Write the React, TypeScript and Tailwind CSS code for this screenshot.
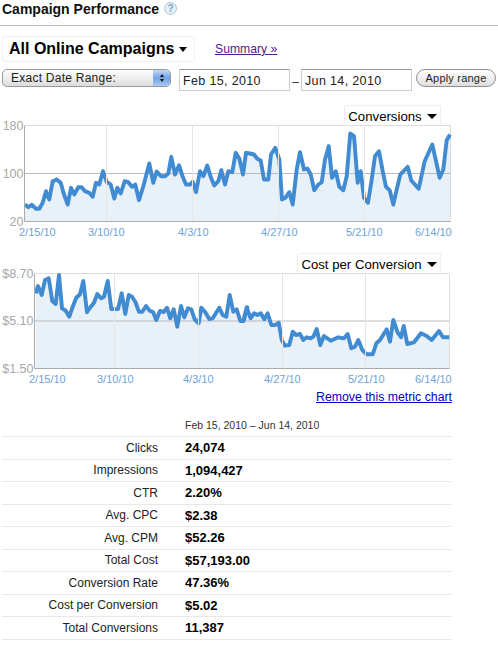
import React from 'react';

type Pt = [number, number];

// points read off the chart, in page pixels relative to the svg
const zoomLeft = (pts: number[][], top: number): Pt[] => pts.map(([x, y]) => [x / 3, y / 3 + top]);
const zoomRight = (pts: number[][], top: number): Pt[] => pts.map(([x, y]) => [240 + x / 3, y / 3 + top]);

const conversions: Pt[] = [
  ...zoomLeft([[75,315],[85,323],[95,316],[108,328],[118,328],[128,310],[138,275],[148,300],[158,245],[170,240],[182,250],[192,285],[203,315],[213,265],[223,285],[235,263],[245,263],[255,275],[268,280],[278,292],[288,250],[298,255],[309,215],[320,247],[332,255],[343,297],[352,265],[362,282],[374,245],[385,248],[396,262],[406,255],[417,302],[430,260],[448,192],[460,250],[470,216],[483,230],[495,230],[505,222],[514,172],[525,225],[537,197],[548,232],[558,255],[570,255],[578,247],[588,278],[600,215],[610,230],[622,198],[633,235],[643,258],[655,245],[664,212],[675,255],[685,215],[697,218],[707,160],[718,177],[729,225]], 0),
  ...zoomRight([[18,160],[30,162],[42,165],[52,178],[62,183],[72,240],[85,240],[93,165],[106,145],[118,180],[126,300],[136,295],[148,278],[158,315],[170,210],[180,158],[192,210],[202,207],[212,225],[223,272],[235,255],[245,248],[255,180],[266,140],[276,235],[287,215],[298,262],[310,272],[320,230],[331,102],[342,110],[353,250],[362,215],[372,295],[384,310],[395,240],[405,170],[417,155],[428,215],[438,262],[449,272],[460,315],[470,270],[481,225],[503,202],[514,243],[536,268],[554,185],[577,135],[599,235],[610,210],[620,122],[630,105]], 0),
];

const costPerConversion: Pt[] = [
  ...zoomLeft([[107,130],[114,108],[125,135],[135,90],[146,85],[157,153],[167,162],[177,75],[186,175],[197,182],[208,200],[218,170],[229,143],[240,133],[250,93],[261,187],[272,170],[282,158],[292,132],[303,145],[312,140],[323,93],[334,177],[354,177],[365,130],[376,192],[386,135],[396,140],[406,155],[417,185],[427,185],[438,168],[449,182],[459,186],[469,210],[480,183],[491,186],[501,173],[511,205],[521,178],[532,230],[543,168],[553,202],[564,175],[574,178],[584,208],[596,220],[604,173],[615,185],[628,207],[638,205],[658,173],[668,195],[679,200],[689,135],[700,185],[710,178],[721,213],[731,213],[742,172]], 0),
  ...zoomRight([[10,213],[20,172],[32,205],[42,190],[52,195],[62,190],[73,208],[83,190],[94,225],[106,225],[116,218],[125,270],[135,287],[148,285],[158,245],[168,255],[180,252],[190,270],[200,262],[212,265],[220,260],[230,237],[241,285],[252,258],[262,265],[272,272],[295,262],[312,265],[323,252],[334,295],[345,290],[355,270],[367,300],[380,313],[398,313],[409,280],[420,270],[440,238],[450,275],[460,210],[472,245],[483,262],[491,228],[502,282],[522,277],[543,250],[560,258],[575,270],[597,243],[609,262],[628,262]], 0),
];

interface ChartProps {
  points: Pt[];
  left: number;
  right: number;
  top: number;
  bottom: number;
  yLabels: string[];
  xTicks: number[];
  xLabels: { x: number; text: string }[];
  height: number;
}

function Chart({ points, left, right, top, bottom, yLabels, xTicks, xLabels, height }: ChartProps) {
  const mid = (top + bottom) / 2;
  const line = points.map(([x, y]) => `${x.toFixed(1)},${y.toFixed(1)}`).join(' ');
  const last = points[points.length - 1];
  const area = `${points[0][0]},${bottom} ${line} ${last[0]},${bottom}`;

  return (
    <svg width={498} height={height} className="block overflow-visible" fontFamily="'Liberation Sans', Arial, sans-serif">
      <polygon points={area} fill="#e8f0f8" />
      <line x1={left} x2={right} y1={top} y2={top} stroke="#dddddd" />
      <line x1={right} x2={right} y1={top} y2={bottom} stroke="#dddddd" />
      <line x1={left} x2={right} y1={mid} y2={mid} stroke="#bbbbbb" />
      <polyline points={line} fill="none" stroke="#418bd2" strokeWidth="3.9" strokeLinejoin="round" />
      {xTicks.map((x) => (
        <line key={x} x1={x} x2={x} y1={top} y2={bottom} stroke="#e6e6e6" />
      ))}
      <line x1={left} x2={left} y1={top} y2={bottom} stroke="#aaaaaa" />
      <line x1={left} x2={right} y1={bottom} y2={bottom} stroke="#aaaaaa" />
      <text x={left - 1} y={top + 4} textAnchor="end" fill="#a8a8a8" fontSize="12.5">{yLabels[0]}</text>
      <text x={left - 1} y={mid + 4} textAnchor="end" fill="#a8a8a8" fontSize="12.5">{yLabels[1]}</text>
      <text x={left - 1} y={bottom + 4} textAnchor="end" fill="#a8a8a8" fontSize="12.5">{yLabels[2]}</text>
      {xLabels.map((l) => (
        <text key={l.text} x={l.x} y={bottom + 14} fill="#6ea3d9" fontSize="11">{l.text}</text>
      ))}
    </svg>
  );
}

function MetricTag({ label, width }: { label: string; width: string }) {
  return (
    <div className={`flex h-[20px] items-center justify-center gap-[5px] rounded-t-[2px] border border-b-0 border-[#eeeeee] pt-[2px] text-[13.2px] text-black ${width}`}>
      {label}
      <span className="h-0 w-0 border-x-[5px] border-t-[5px] border-x-transparent border-t-black" />
    </div>
  );
}

const stats = [
  ['Clicks', '24,074'],
  ['Impressions', '1,094,427'],
  ['CTR', '2.20%'],
  ['Avg. CPC', '$2.38'],
  ['Avg. CPM', '$52.26'],
  ['Total Cost', '$57,193.00'],
  ['Conversion Rate', '47.36%'],
  ['Cost per Conversion', '$5.02'],
  ['Total Conversions', '11,387'],
];

export default function App() {
  return (
    <div className="h-[648px] w-[498px] overflow-hidden bg-white font-['Liberation_Sans',Arial,sans-serif] text-black">
      <div className="flex h-[26px] items-start gap-[5px] border-b border-[#bbbbbb] pl-[2px] pt-[1px]">
        <h1 className="text-[14px] font-bold leading-[16px] text-[#111111]">Campaign Performance</h1>
        <span className="mt-[1px] flex h-[13px] w-[13px] items-center justify-center rounded-full border border-[#a9c6dc] bg-[#e6f0f7] text-[10px] font-bold leading-none text-[#7ba6c6]">?</span>
      </div>

      <div className="mt-[10px] flex items-center pl-[2px]">
        <div className="flex h-[26px] w-[193px] items-center gap-[5px] rounded-[2px] border border-[#f0f0f0] pl-[6px]">
          <span className="whitespace-nowrap text-[16px] font-bold leading-none">All Online Campaigns</span>
          <span className="h-0 w-0 border-x-[4.5px] border-t-[5px] border-x-transparent border-t-black" />
        </div>
        <a href="#summary" className="ml-[20px] text-[12.2px] text-[#551a8b] underline">Summary »</a>
      </div>

      <div className="mt-[7px] flex items-start pl-[2px]">
        <div className="flex h-[18px] w-[169px] items-stretch overflow-hidden rounded-[5px] border border-[#9a9a9a] bg-gradient-to-b from-[#fdfdfd] via-[#eeeeee] to-[#dcdcdc]">
          <span className="flex-1 pl-[8px] text-[12px] leading-[16px] tracking-[0.25px] text-[#222222]">Exact Date Range:</span>
          <span className="flex w-[17px] flex-col items-center justify-center gap-[2px] bg-gradient-to-b from-[#c3d9f5] via-[#6fa3e6] to-[#a9c9f2]">
            <span className="h-0 w-0 border-x-[2.5px] border-b-[3px] border-x-transparent border-b-[#111111]" />
            <span className="h-0 w-0 border-x-[2.5px] border-t-[3px] border-x-transparent border-t-[#111111]" />
          </span>
        </div>
        <div className="ml-[8px] h-[22px] w-[111px] border border-[#cccccc] border-t-[#999999] pl-[3px] text-[12.5px] leading-[22px] tracking-[0.35px] text-[#222222]">Feb 15, 2010</div>
        <span className="w-[11px] pt-[5px] text-center text-[12px] leading-[16px] text-[#333333]">–</span>
        <div className="h-[22px] w-[111px] border border-[#cccccc] border-t-[#999999] pl-[3px] text-[12.5px] leading-[22px] tracking-[0.35px] text-[#222222]">Jun 14, 2010</div>
        <button className="ml-[4px] h-[18px] w-[80px] rounded-full border border-[#8f8f8f] bg-gradient-to-b from-[#ffffff] via-[#f0f0f0] to-[#dddddd] text-[11px] leading-[14px] tracking-[0.2px] text-[#222222]">Apply range</button>
      </div>

      <div className="mt-[14px] flex justify-end pr-[57px]">
        <MetricTag label="Conversions" width="w-[97px]" />
      </div>
      <Chart
        points={conversions.map(([x, y]) => [x, y + 100 - 125.5] as Pt)}
        left={24.5}
        right={450.5}
        top={0.5}
        bottom={96.5}
        height={114}
        yLabels={['180', '100', '20']}
        xTicks={[106.5, 192.5, 278.5, 364.5]}
        xLabels={[
          { x: 19, text: '2/15/10' },
          { x: 88, text: '3/10/10' },
          { x: 178, text: '4/3/10' },
          { x: 261, text: '4/27/10' },
          { x: 346, text: '5/21/10' },
          { x: 415, text: '6/14/10' },
        ]}
      />

      <div className="mt-[14px] flex justify-end pr-[57px]">
        <MetricTag label="Cost per Conversion" width="w-[144px]" />
      </div>
      <Chart
        points={costPerConversion.map(([x, y]) => [x, y + 250 - 273] as Pt)}
        left={34.5}
        right={449.5}
        top={0.5}
        bottom={95.5}
        height={112}
        yLabels={['$8.70', '$5.10', '$1.50']}
        xTicks={[114.5, 198.5, 282.5, 365.5]}
        xLabels={[
          { x: 29, text: '2/15/10' },
          { x: 97, text: '3/10/10' },
          { x: 183, text: '4/3/10' },
          { x: 264, text: '4/27/10' },
          { x: 348, text: '5/21/10' },
          { x: 415, text: '6/14/10' },
        ]}
      />

      <div className="mt-[5px] flex justify-end pr-[46px]">
        <a href="#remove" className="text-[12.3px] leading-[14px] text-[#0000cc] underline">Remove this metric chart</a>
      </div>

      <div className="ml-[2px] mt-[15px] w-[450px]">
        <div className="flex h-[18px] items-start border-b border-[#e8e8e8]">
          <span className="ml-[183px] text-[10.5px] leading-[13px] text-[#333333]">Feb 15, 2010 – Jun 14, 2010</span>
        </div>
        {stats.map(([label, value]) => (
          <div key={label} className="flex h-[22.5px] items-center border-b border-[#e8e8e8] text-[12px]">
            <span className="w-[156px] text-right text-[#222222]">{label}</span>
            <span className="ml-[27px] text-[13px] font-bold text-black">{value}</span>
          </div>
        ))}
      </div>
    </div>
  );
}
